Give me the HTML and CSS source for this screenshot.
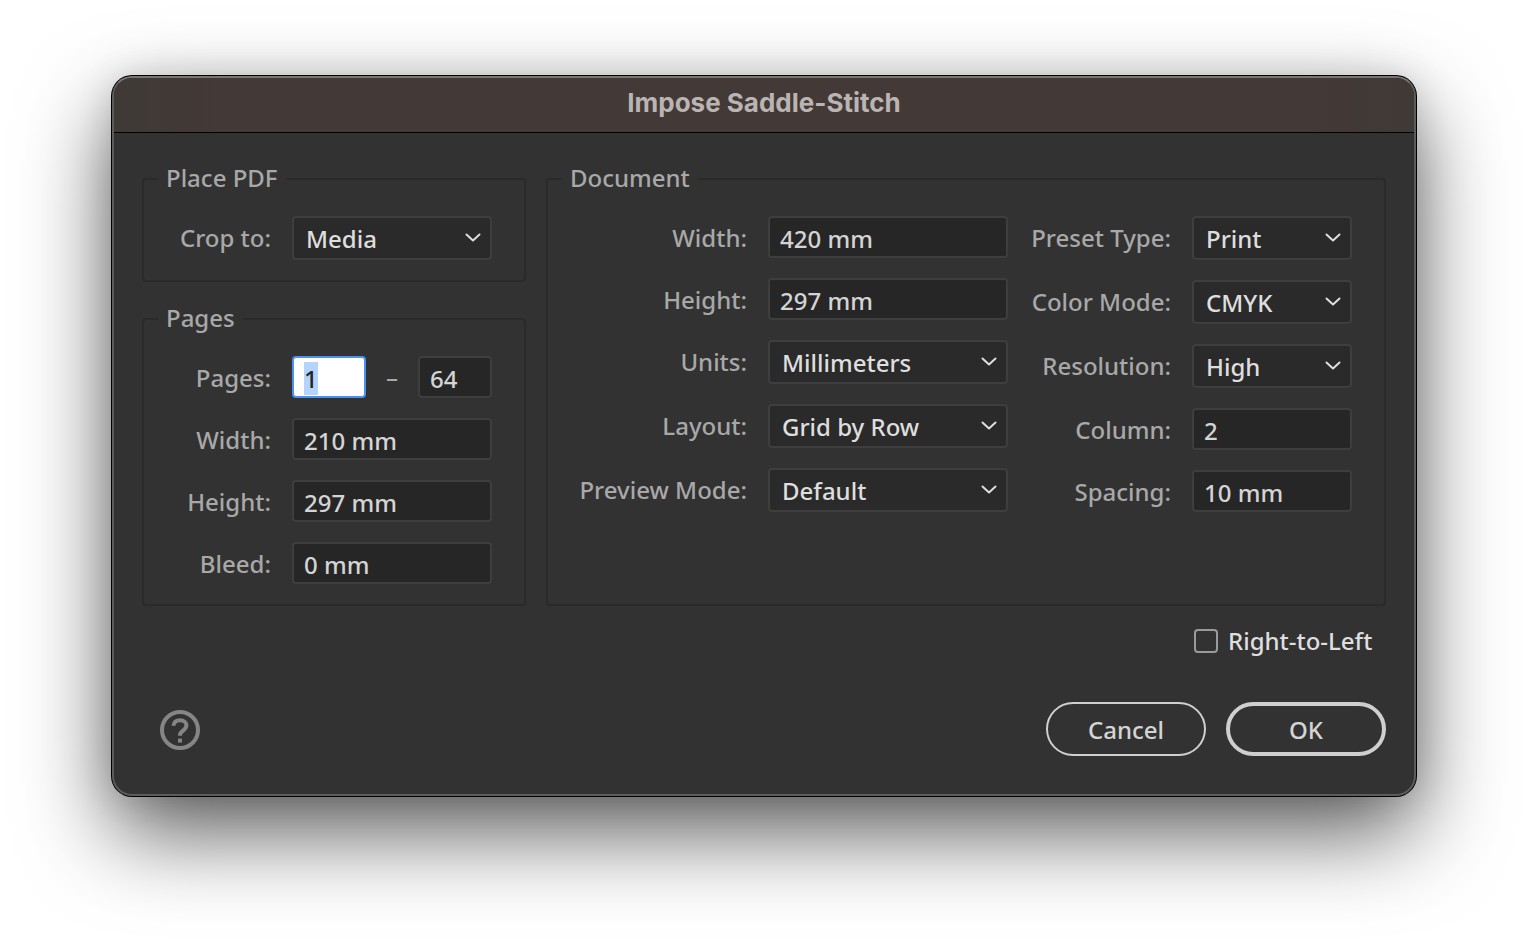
FILE: index.html
```html
<!DOCTYPE html>
<html lang="en">
<head>
<meta charset="utf-8">
<title>Impose Saddle-Stitch</title>
<link rel="stylesheet" href="styles.css">
</head>
<body>
<svg class="sprite" aria-hidden="true">
  <symbol id="chevron" viewBox="0 0 16 10"><path d="M1.5 1.5 8 7.5l6.5-6" fill="none" stroke="currentColor" stroke-width="2" stroke-linecap="round" stroke-linejoin="round"/></symbol>
</svg>
<main class="dialog" role="dialog" aria-labelledby="title">
  <header class="titlebar"><h1 id="title">Impose Saddle-Stitch</h1></header>
  <form class="content">
    <div class="panels">
      <div class="side">
        <fieldset class="group">
          <legend>Place PDF</legend>
          <div class="rows">
            <div class="row"><label for="crop">Crop to:</label><div class="select"><select id="crop"><option>Media</option></select><svg class="chevron"><use href="#chevron"/></svg></div></div>
          </div>
        </fieldset>
        <fieldset class="group">
          <legend>Pages</legend>
          <div class="rows">
            <div class="row"><label for="first">Pages:</label><div class="range"><input id="first" type="text" value="1"><span>–</span><input id="last" type="text" value="64" aria-label="Last page"></div></div>
            <div class="row"><label for="page-width">Width:</label><input id="page-width" type="text" value="210 mm"></div>
            <div class="row"><label for="page-height">Height:</label><input id="page-height" type="text" value="297 mm"></div>
            <div class="row"><label for="bleed">Bleed:</label><input id="bleed" type="text" value="0 mm"></div>
          </div>
        </fieldset>
      </div>
      <fieldset class="group document">
        <legend>Document</legend>
        <div class="columns">
          <div class="rows wide">
            <div class="row"><label for="doc-width">Width:</label><input id="doc-width" type="text" value="420 mm"></div>
            <div class="row"><label for="doc-height">Height:</label><input id="doc-height" type="text" value="297 mm"></div>
            <div class="row"><label for="units">Units:</label><div class="select"><select id="units"><option>Millimeters</option></select><svg class="chevron"><use href="#chevron"/></svg></div></div>
            <div class="row"><label for="layout">Layout:</label><div class="select"><select id="layout"><option>Grid by Row</option></select><svg class="chevron"><use href="#chevron"/></svg></div></div>
            <div class="row"><label for="preview">Preview Mode:</label><div class="select"><select id="preview"><option>Default</option></select><svg class="chevron"><use href="#chevron"/></svg></div></div>
          </div>
          <div class="rows narrow">
            <div class="row"><label for="preset">Preset Type:</label><div class="select"><select id="preset"><option>Print</option></select><svg class="chevron"><use href="#chevron"/></svg></div></div>
            <div class="row"><label for="color">Color Mode:</label><div class="select"><select id="color"><option>CMYK</option></select><svg class="chevron"><use href="#chevron"/></svg></div></div>
            <div class="row"><label for="resolution">Resolution:</label><div class="select"><select id="resolution"><option>High</option></select><svg class="chevron"><use href="#chevron"/></svg></div></div>
            <div class="row"><label for="column">Column:</label><input id="column" type="text" value="2"></div>
            <div class="row"><label for="spacing">Spacing:</label><input id="spacing" type="text" value="10 mm"></div>
          </div>
        </div>
      </fieldset>
    </div>
    <div class="option"><input id="rtl" type="checkbox"><label for="rtl">Right-to-Left</label></div>
    <footer class="actions">
      <button class="help" type="button" aria-label="Help">
        <svg viewBox="0 0 40 40" width="40" height="40" fill="none" stroke="currentColor" stroke-width="4"><circle cx="20" cy="20" r="18"/><path d="M13.600 15.800c0-3.600 2.600-5.600 6.400-5.600s6.400 2.200 6.400 5.400c0 4.800-6.400 5-6.400 9.400v.8" stroke-width="4"/><path d="M18 28.600h4v4h-4z" fill="currentColor" stroke="none"/></svg>
      </button>
      <button class="button" type="button">Cancel</button>
      <button class="button primary" type="submit">OK</button>
    </footer>
  </form>
</main>
<script src="script.js"></script>
</body>
</html>
```
FILE: styles.css
```css
* { box-sizing: border-box; }

body {
  margin: 0;
  padding: 76px 112px 148px;
  background: #fff;
  color: #a8a8a8;
  font: 500 24px/30px "Noto Sans", "Open Sans", sans-serif;
}

input, select, button { font: inherit; color: #d4d4d4; margin: 0; }

.sprite { position: absolute; width: 0; height: 0; }

.dialog {
  border: 2px solid #5c5c5c;
  border-top-color: #7a7573;
  border-radius: 20px;
  background: #323232;
  box-shadow: 0 0 0 1px #000, 0 36px 88px rgba(0, 0, 0, .65), 0 0 36px rgba(0, 0, 0, .12);
}

.titlebar {
  padding: 9px 0 13px;
  border-bottom: 1px solid #000;
  border-radius: 18px 18px 0 0;
  background: linear-gradient(90deg, #3f3a36, #433937 8%, #433937 92%, #403a37);
  text-align: center;
}

.titlebar h1 {
  margin: 0;
  color: #bab4b2;
  font: 700 26px/32px Inter, sans-serif;
}

.content { padding: 30px 28px 38px; }

.panels { display: flex; gap: 20px; }

.side { display: flex; flex-direction: column; gap: 21px; flex: 0 0 384px; }

.group {
  min-width: 0;
  margin: 0;
  padding: 21px 32px 20px 14px;
  border: 2px solid #2a2a2a;
  border-radius: 4px;
}

.group legend { padding: 0 8px 2px; }

.document { flex: 1; }

.columns { display: flex; }

.wide { flex: 1; }

.narrow { flex: 0 0 344px; }

.rows { display: flex; flex-direction: column; gap: 20px; }

.row {
  display: grid;
  grid-template-columns: 1fr 200px;
  gap: 21px;
  align-items: start;
}

.wide .row { grid-template-columns: 1fr 240px; }

.narrow .row { grid-template-columns: 1fr 160px; }

.row label { padding-top: 7px; text-align: right; white-space: nowrap; }

input[type="text"] {
  width: 100%;
  height: 42px;
  padding: 2px 10px 0;
  border: 2px solid #3e3e3e;
  border-radius: 4px;
  outline: none;
  background: #262626;
}

input[type="text"]:focus {
  border-color: #4b91f0;
  background: #fff;
  color: #262626;
}

input::selection { background: #b4d4fb; color: #262626; }

.range {
  display: grid;
  grid-template-columns: 74px 1fr 74px;
  align-items: center;
  text-align: center;
}

.select { position: relative; }

.select select {
  display: block;
  width: 100%;
  height: 44px;
  padding: 2px 32px 0 12px;
  border: 2px solid #3e3e3e;
  border-radius: 4px;
  appearance: none;
  background: #2a2a2a;
  color: #dedede;
}

.chevron {
  position: absolute;
  top: 17px;
  right: 11px;
  width: 16px;
  height: 10px;
  color: #dedede;
  pointer-events: none;
}

.option {
  display: flex;
  justify-content: flex-end;
  align-items: center;
  gap: 10px;
  padding-top: 20px;
  color: #dedede;
}

.option label { flex: 0 0 158px; }

.option input {
  width: 24px;
  height: 24px;
  border: 2px solid #9a9a9a;
  border-radius: 4px;
  appearance: none;
}

.actions {
  display: flex;
  align-items: center;
  gap: 20px;
  padding-top: 46px;
}

.help {
  display: flex;
  margin: 2px auto 0 18px;
  padding: 0;
  border: 0;
  background: none;
  color: #858585;
}

.button {
  width: 160px;
  height: 54px;
  padding: 2px 0 0;
  border: 2px solid #cfcfcf;
  border-radius: 27px;
  background: none;
}

.primary { border-width: 4px; }
```
FILE: script.js
```js
const first = document.getElementById("first");
first.focus();
first.select();
```
